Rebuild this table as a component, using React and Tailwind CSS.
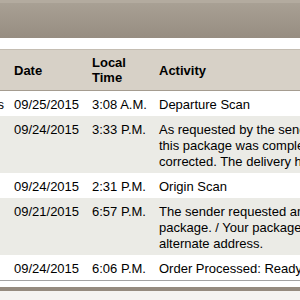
const rows = [
  {
    loc: 'United States',
    date: '09/25/2015',
    time: '3:08 A.M.',
    activity: ['Departure Scan'],
  },
  {
    loc: '',
    date: '09/24/2015',
    time: '3:33 P.M.',
    activity: [
      'As requested by the sender, the address on',
      'this package was completely',
      'corrected. The delivery has been rescheduled.',
    ],
  },
  {
    loc: '',
    date: '09/24/2015',
    time: '2:31 P.M.',
    activity: ['Origin Scan'],
  },
  {
    loc: '',
    date: '09/21/2015',
    time: '6:57 P.M.',
    activity: [
      'The sender requested an alternate delivery address for this',
      'package. / Your package will be delivered to the',
      'alternate address.',
    ],
  },
  {
    loc: '',
    date: '09/24/2015',
    time: '6:06 P.M.',
    activity: ['Order Processed: Ready for UPS'],
  },
];

function App() {
  return (
    <div
      className="w-[300px] h-[300px] overflow-hidden bg-white text-[13px] text-black"
      style={{ fontFamily: '"Liberation Sans", Arial, sans-serif' }}
    >
      {/* top bar */}
      <div className="h-[38px] border-t-[3px] border-[#b3ab9f] bg-gradient-to-b from-[#a8a094] to-[#978d81]" />

      <div className="h-[11px]" />

      {/* table header */}
      <div className="grid grid-cols-[9px_78px_67px_1fr] h-[42px] bg-[#d7d1c7] border-t border-[#c4bdb2] border-b border-b-[#a59c90] font-bold leading-[15px]">
        <div />
        <div className="flex items-center pl-[5px]">Date</div>
        <div className="flex items-center pl-[5px]">
          <span>
            Local
            <br />
            Time
          </span>
        </div>
        <div className="flex items-center pl-[5px] whitespace-nowrap">Activity</div>
      </div>

      {/* rows */}
      {rows.map((r, i) => (
        <div
          key={i}
          className={
            'grid grid-cols-[9px_78px_67px_1fr] leading-4 pt-[6px] pb-[3px] ' +
            (i % 2 === 1 ? 'bg-[#ebebe6]' : 'bg-white')
          }
        >
          <div className="flex justify-end overflow-visible whitespace-nowrap pr-[5px]">
            {r.loc}
          </div>
          <div className="pl-[5px] whitespace-nowrap">{r.date}</div>
          <div className="pl-[5px] whitespace-nowrap">{r.time}</div>
          <div className="pl-[5px] whitespace-nowrap overflow-hidden">
            {r.activity.map((line, j) => (
              <div key={j}>{line}</div>
            ))}
          </div>
        </div>
      ))}

      <div className="border-t border-[#a3a3a3] h-[7px]" />
      <div className="h-[4px] bg-[#958b7f]" />
      <div className="h-[10px] bg-[#f4f3f1]" />
    </div>
  );
}

export default App;
